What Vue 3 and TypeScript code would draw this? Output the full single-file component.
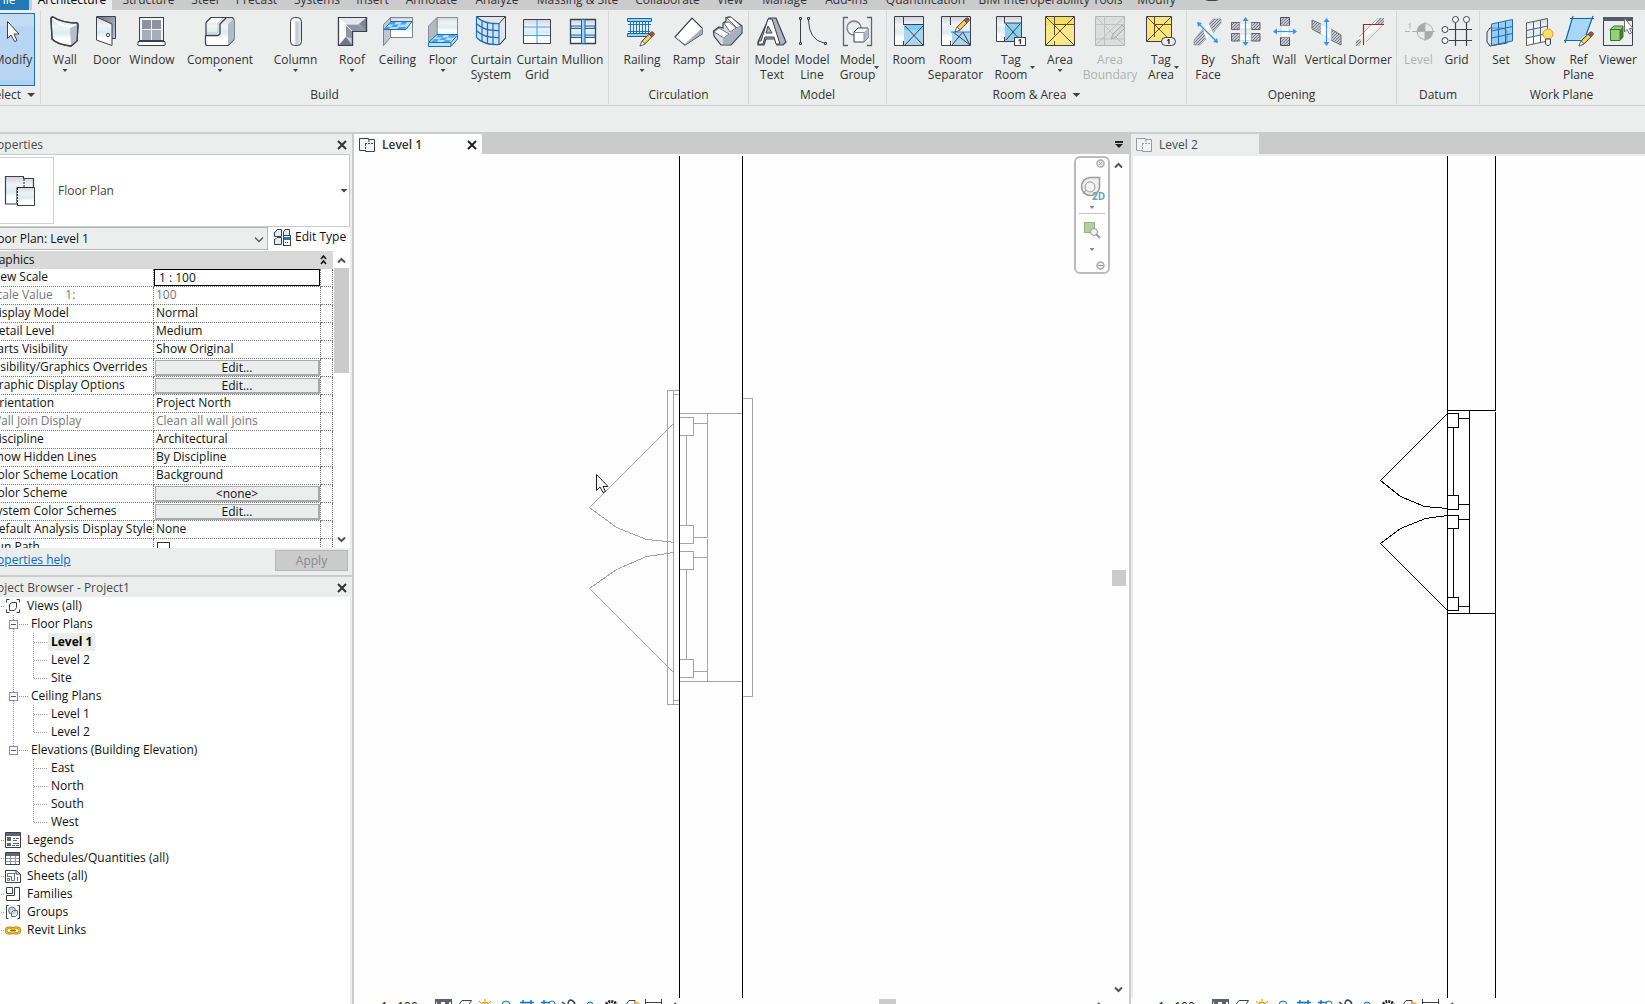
<script setup lang="ts">
import { ref } from 'vue'

type Tool = { icon: string; label: string[]; menu?: 'below' | 'side'; disabled?: boolean }
type Panel = { id: string; title: string; menu?: boolean; tools: Tool[] }
type Row = { name: string; kind: 'text' | 'button' | 'input' | 'check'; value: string; muted?: boolean }
type Node = { label: string; kind: 'root' | 'group' | 'leaf'; icon?: string; last?: boolean; active?: boolean }

const tabs = ['Architecture', 'Structure', 'Steel', 'Precast', 'Systems', 'Insert', 'Annotate', 'Analyze', 'Massing & Site', 'Collaborate', 'View', 'Manage', 'Add-Ins', 'Quantification', 'BIM Interoperability Tools', 'Modify']

const panels: Panel[] = [
  { id: 'build', title: 'Build', tools: [
    { icon: 'wall', label: ['Wall'], menu: 'below' },
    { icon: 'door', label: ['Door'] },
    { icon: 'window', label: ['Window'] },
    { icon: 'component', label: ['Component'], menu: 'below' },
    { icon: 'column', label: ['Column'], menu: 'below' },
    { icon: 'roof', label: ['Roof'], menu: 'below' },
    { icon: 'ceiling', label: ['Ceiling'] },
    { icon: 'floor', label: ['Floor'], menu: 'below' },
    { icon: 'curtainSystem', label: ['Curtain', 'System'] },
    { icon: 'curtainGrid', label: ['Curtain', 'Grid'] },
    { icon: 'mullion', label: ['Mullion'] } ] },
  { id: 'circulation', title: 'Circulation', tools: [
    { icon: 'railing', label: ['Railing'], menu: 'below' },
    { icon: 'ramp', label: ['Ramp'] },
    { icon: 'stair', label: ['Stair'] } ] },
  { id: 'model', title: 'Model', tools: [
    { icon: 'modelText', label: ['Model', 'Text'] },
    { icon: 'modelLine', label: ['Model', 'Line'] },
    { icon: 'modelGroup', label: ['Model', 'Group'], menu: 'side' } ] },
  { id: 'room', title: 'Room & Area', menu: true, tools: [
    { icon: 'room', label: ['Room'] },
    { icon: 'separator', label: ['Room', 'Separator'] },
    { icon: 'tagRoom', label: ['Tag', 'Room'], menu: 'side' },
    { icon: 'area', label: ['Area'], menu: 'below' },
    { icon: 'areaBoundary', label: ['Area', 'Boundary'], disabled: true },
    { icon: 'tagArea', label: ['Tag', 'Area'], menu: 'side' } ] },
  { id: 'opening', title: 'Opening', tools: [
    { icon: 'byFace', label: ['By', 'Face'] },
    { icon: 'shaft', label: ['Shaft'] },
    { icon: 'openWall', label: ['Wall'] },
    { icon: 'vertical', label: ['Vertical'] },
    { icon: 'dormer', label: ['Dormer'] } ] },
  { id: 'datum', title: 'Datum', tools: [
    { icon: 'level', label: ['Level'], disabled: true },
    { icon: 'grid', label: ['Grid'] } ] },
  { id: 'plane', title: 'Work Plane', tools: [
    { icon: 'set', label: ['Set'] },
    { icon: 'show', label: ['Show'] },
    { icon: 'refPlane', label: ['Ref', 'Plane'] },
    { icon: 'viewer', label: ['Viewer'] } ] },
]

const D = '#3b404c'
const pencil = (x: number, y: number) =>
  `<g transform="translate(${x} ${y})"><path d="M0 15L2 10L9 3L12 6L5 13Z" fill="#f5b324" stroke="${D}" stroke-width=".8"/><path d="M0 15L2 10L5 13Z" fill="#fff" stroke="${D}" stroke-width=".6"/><path d="M9 3L11 1Q13 0 14 2T14 4L12 6Z" fill="#9a5a34" stroke="${D}" stroke-width=".6"/><path d="M4 11L10 5" stroke="#ffe79a" stroke-width="1.2"/></g>`

const icons: Record<string, string> = {
  wall: `<path d="M2 4Q2 2 4 2Q14 8 28 8Q29 8 29 10L28 26L22 31Q9 30 3 24Z" fill="url(#face)" stroke="${D}" stroke-width="1.3"/><path d="M21 13L28 8V26L22 31Z" fill="#b9bdc8"/><path d="M4 4Q12 11 21 12L27 9" fill="none" stroke="#fff" stroke-width="2"/><path d="M2 4Q2 2 4 2Q14 8 28 8Q29 8 29 10L28 26L22 31Q9 30 3 24Z" fill="none" stroke="${D}" stroke-width="1.3"/>`,
  door: `<path d="M5.500 1.500H24.500V23.500H20" fill="url(#steel)" stroke="${D}"/><path d="M5.500 2L21 9V30.500L5.500 25Z" fill="url(#face)" stroke="${D}"/><circle cx="17" cy="20" r="1.600" fill="#fff" stroke="${D}"/>`,
  window: `<rect x="3.500" y="2.500" width="24" height="23" fill="#f3f4f6" stroke="${D}"/><path d="M6 5H15V14H6ZM16 5H25V14H16Z" fill="#8e93a1"/><path d="M6 15H15V25H6ZM16 15H25V25H16Z" fill="#a9adba"/><path d="M2 26.500H29V28Q30 30.500 28 30.500H3Q1 30.500 2 28Z" fill="#fff" stroke="${D}"/>`,
  component: `<path d="M2 8Q2 7 7 2.500H28Q30 3 30 6V24Q30 25 24 30.500H3Q1.500 30.500 1.500 28V21L2 20Z" fill="url(#face)" stroke="${D}" stroke-width="1.200"/><path d="M24 9L30 4V24L24 30Z" fill="#b5b9c5"/><path d="M8 3H20L15 8H3Z" fill="#fff"/><path d="M22 3L16 9V19L14 20.500H2" fill="none" stroke="${D}" stroke-width="1.300"/><path d="M19 3L14 8V18H3" fill="none" stroke="#c3c7d0"/>`,
  column: `<rect x="10.500" y="2.500" width="11" height="28" rx="4" fill="url(#tube)" stroke="${D}"/><ellipse cx="16" cy="5" rx="4" ry="1.500" fill="#fff"/>`,
  roof: `<path d="M2.500 2.500H30.500V16.500H16.500V30.500H2.500Z" fill="#c9ccd4" stroke="${D}" stroke-width="1.200"/><path d="M3 3H30L23 9H9Z" fill="#e6e8ec"/><path d="M3 3L10 10V22L3 30Z" fill="#fafafa"/><path d="M10 10H23L30 16H16V23L10 22Z" fill="#8f95a3"/><path d="M3 30L10 22L16 30Z" fill="#70768a"/><path d="M30 3L23 9L30 16Z" fill="#7f8594"/><path d="M10 10L16 16M10 10L3 3" stroke="#fff"/><path d="M2.500 2.500H30.500V16.500H16.500V30.500H2.500Z" fill="none" stroke="${D}" stroke-width="1.200"/>`,
  ceiling: `<path d="M8.500 2.500H30.500V22.500H8.500" fill="url(#face)" stroke="#7e828b"/><path d="M1.500 9.500L8.500 2.500V22.500L1.500 30.500Z" fill="#c2c6d0" stroke="#7e828b"/><path d="M9 6.500H30L24 14.500H2Z" fill="#b7dcfb" stroke="#1971b8"/><path d="M9 7H14L12 9.500H18L20 7H25L23 9.500H17L14.500 12H9L11.500 9.500H6Z M4 12H9L7 14H3ZM20 12H25L23 14H15L17 12Z" fill="#45a0f5"/>`,
  floor: `<path d="M10 2.500H30.500V20H10Z" fill="url(#face)" stroke="#8a8e96"/><path d="M1.500 11L10 2.500V20L1.500 27Z" fill="#b2b7c2" stroke="#8a8e96"/><path d="M10 19.500H30.500V24L24 31.500H1.500V27.500Z" fill="#b9e1f7" stroke="#1971b8"/><path d="M11 20H17L15 22.500H9ZM22 20H29L27 22.500H21ZM15 22.500H21L18 25H12ZM7 24H12L10 27H4ZM18 25H24L22 27H16Z" fill="#53a8f5"/><path d="M2 27.500H24L30 20.500M24 27.500V31" stroke="#1971b8" fill="none"/>`,
  curtainSystem: `<path d="M1.500 1.500H30.500V23L25 29.500Q10 31 2 23Z" fill="#e3e5e9" stroke="${D}"/><path d="M1.500 2Q8 9 24 8V30Q9 30 2 23Z" fill="#cfe3f5"/><path d="M2 2Q8 9 24 8.500M2 9Q9 16 24 15.500M2 16Q9 23 24 22.500M2 23Q9 30 24 29.500M7 5V27M12.500 7V29M18 8V30M24 8V30M1.500 2V23" fill="none" stroke="#1c6fb5" stroke-width="1.200"/><path d="M24 8.500L30 2M30.500 1.500V23L24.500 29.500" fill="none" stroke="${D}"/>`,
  curtainGrid: `<path d="M2.500 4.500H29.500V28.500H2.500Z" fill="url(#face)" stroke="${D}"/><path d="M3 12H29M3 20.500H29M16 5V28" stroke="#3c9cff"/>`,
  mullion: `<path d="M3.500 4.500H28.500V28.500H3.500Z" fill="url(#face)" stroke="${D}" stroke-width="1.300"/><path d="M4 11H28V13.500H4ZM4 20H28V22.500H4Z" fill="#b8dbf7" stroke="#1767a8"/><path d="M14.500 4.500H18V28.500H14.500Z" fill="#9cd0f8" stroke="#1767a8"/>`,
  railing: `<path d="M1.500 3.500H25.500V6.500H1.500ZM1.500 18.500H24V21.500H1.500Z" fill="#9bd0fa" stroke="#1767a8"/><path d="M2 9.500H25M2 16.500H24M4.500 7V18M7.500 7V18M10.500 7V18M13.500 7V18M16.500 7V18M19.500 7V18M22.500 7V18" stroke="#1c74bd" fill="none"/>${pencil(14, 16)}`,
  ramp: `<path d="M2 22L19 3L29 13V19L12 30Z" fill="#fff" stroke="${D}" stroke-width="1.200"/><path d="M12 29L29 13V19L12 30Z" fill="#a6abb9"/><path d="M2.500 22L12 29L29 13" fill="none" stroke="#d5d8de"/>`,
  stair: `<path d="M1.500 16L7 12L11 13V8L14 6V2.500L18 2L30 11V18L19 30H9L2 21Z" fill="#d9dbe0" stroke="${D}" stroke-width="1.200"/><path d="M2 17L7 13L17 19L12 23ZM12 8L17 7L24 13L18 17ZM15 3L19 2L29 11L25 13Z" fill="#fff" stroke="${D}" stroke-width=".7"/><path d="M18 18L25 13L29 12V18L19 29L11 29V24L17 20Z" fill="#aab0bc"/>`,
  modelText: `<path d="M13 3H20L30 27L27 30H21L19 24H10L8 30H2V27Z" fill="#aeb3c0" stroke="${D}" stroke-width="1.200"/><path fill-rule="evenodd" d="M12 4H16L24 29H20L18 22H9L7 29H2L3 26H5ZM12 11L10 18H16Z" fill="#fff" stroke="${D}"/>`,
  modelLine: `<path d="M4.500 5V27M12.500 5Q13 25 28 28" fill="none" stroke="${D}"/><path d="M3.500 2.500H5.500V4.500H3.500ZM3.500 27.500H5.500V29.500H3.500ZM11.500 2.500H13.500V4.500H11.500ZM28.500 27.500H30.500V29.500H28.500Z" fill="#fff" stroke="${D}"/>`,
  modelGroup: `<path d="M6 2.500H1.500V30.500H6M25 2.500H29.500V30.500H25" fill="none" stroke="#62666f" stroke-width="1.300"/><circle cx="12" cy="13" r="7" fill="url(#face)" stroke="#7b7f89" stroke-width="1.300"/><path d="M12 17L16 13H26V23L22 27H12Z" fill="#fff" stroke="${D}"/><path d="M22 17L26 13V23L22 27Z" fill="#b6bac5"/><path d="M12.500 17.500H22V26.500" fill="none" stroke="#898e9b"/>`,
  room: `<path d="M1.500 1.500H30.500V30.500H1.500Z" fill="url(#face)"/><path d="M11 10H31V31H11Z" fill="#a9d6ee"/><path d="M11 10H31V15H11Z" fill="#7fcdf3"/><path d="M10.500 2V10M10.500 26V30M10 9.500H30M12 11L30 30M30 11L12 30" fill="none" stroke="${D}"/><path d="M1.500 1.500H30.500V30.500H1.500Z" fill="none" stroke="${D}"/>`,
  separator: `<path d="M1.500 1.500H30.500V30.500H1.500Z" fill="url(#face)"/><path d="M12 17H31V31H12Z" fill="#a9d6ee"/><path d="M10.500 2V10M10.500 26V30M12 30L23 17L30 30M13 17L30 30" fill="none" stroke="${D}"/><path d="M1.500 1.500H30.500V30.500H1.500Z" fill="none" stroke="${D}"/><path d="M11 17H30" stroke="#1b8bf0"/>${pencil(15, 2)}`,
  tagRoom: `<path d="M1.500 1.500H26.500V26.500H1.500Z" fill="url(#face)"/><path d="M10 8H26V26H10Z" fill="#8fcdee"/><path d="M9.500 2V8M9.500 22V26M9 8H26M11 9L25 25M25 9L11 25" fill="none" stroke="${D}"/><path d="M1.500 1.500H26.500V26.500H1.500Z" fill="none" stroke="${D}"/><rect x="19.500" y="22.500" width="11" height="8" fill="#fff" stroke="${D}"/><text x="25" y="29" font-size="7" font-weight="700" text-anchor="middle">1</text>`,
  area: `<path d="M1.500 1.500H30.500V30.500H1.500Z" fill="#ffe88c"/><path d="M2 2H30V10H2Z" fill="#ffdc62"/><path d="M10.500 2V10M10 9.500H30M10.500 26V30M10.500 10V20M2 2L30 30M30 2L2 30" fill="none" stroke="#5b512d"/><path d="M1.500 1.500H30.500V30.500H1.500Z" fill="none" stroke="${D}"/>`,
  areaBoundary: `<path d="M1.500 1.500H30.500V30.500H1.500Z" fill="#dcdedd"/><path d="M10.500 2V30M2 9.500H30M2 24H30M2 2L30 30M30 2L2 30" fill="none" stroke="#bfc1c1"/><path d="M1.500 1.500H30.500V30.500H1.500Z" fill="none" stroke="#b4b6b6"/><path d="M17 24L19 19L28 10L31 13L22 22Z" fill="#d3d5d5" stroke="#a9abab"/>`,
  tagArea: `<path d="M1.500 1.500H26.500V26.500H1.500Z" fill="#ffe37c"/><path d="M9.500 2V22M9 9.500H26M2 2L26 26M26 2L2 26" fill="none" stroke="#5b512d"/><path d="M1.500 1.500H26.500V26.500H1.500Z" fill="none" stroke="${D}"/><rect x="16.500" y="22.500" width="14" height="8" rx="4" fill="#eceef1" stroke="${D}"/><text x="23.500" y="29" font-size="7" font-weight="700" text-anchor="middle">1</text>`,
  byFace: `<path d="M17 9L21 4H29V8L21 18ZM2 25L11 14L14 24L8 30H2Z" fill="url(#hatch)" stroke="#8b8f98" stroke-width=".6"/><path d="M17 9L21 18L14 24L11 14Z" fill="#fff"/><path d="M7 9L24 26" stroke="#3393f0" stroke-width="1.200"/><path d="M5 7L10 8L6 12ZM26 28L21 27L25 23Z" fill="#3393f0"/>`,
  shaft: `<path d="M1.500 7.500H9.500V14.500H1.500ZM21.500 7.500H30V14.500H21.500ZM1.500 18.500H9.500V26H1.500ZM21.500 18.500H30V26H21.500Z" fill="url(#hatch)" stroke="#60656f"/><path d="M10 8H21V14H10ZM10 19H21V25.500H10Z" fill="#fff" stroke="#d9dadd"/><path d="M15.500 5V28" stroke="#3393f0" stroke-width="1.200"/><path d="M15.500 2L18.500 6H12.500ZM15.500 31L18.500 27H12.500Z" fill="#3393f0"/>`,
  openWall: `<path d="M11.500 2.500H20.500V10.500H11.500ZM11.500 22.500H20.500V30.500H11.500Z" fill="url(#hatch)" stroke="#4b505b"/><path d="M12 11H20V22H12Z" fill="#fff" stroke="#d9dadd"/><path d="M7 16.500H25" stroke="#3393f0" stroke-width="1.200"/><path d="M4 16.500L8 13.500V19.500ZM28 16.500L24 13.500V19.500Z" fill="#3393f0"/>`,
  vertical: `<path d="M2 5L11 9V19L2 14ZM21 14L31 20V30L21 25Z" fill="url(#hatch)" stroke="#6a6f79"/><path d="M11 9L21 14V25L11 19Z" fill="#fff" stroke="#d9dadd"/><path d="M16.500 6V28" stroke="#3393f0" stroke-width="1.200"/><path d="M16.500 3L19.500 7H13.500ZM16.500 31L19.500 27H13.500Z" fill="#3393f0"/>`,
  dormer: `<path d="M2 25L6 26L30 7V2H25L2 25Z" fill="#fff"/><path d="M21 9L25 2.500L30 3V9H22ZM2 25L7 24V28L5 31H1.500Z" fill="url(#hatch)"/><path d="M5 22L24 3M12 27L30 9" stroke="#aeb1b8"/><path d="M9.500 30V9.500H30" fill="none" stroke="#b8201c" stroke-width="1.200"/>`,
  level: `<path d="M2 16.500H10" stroke="#b3b5b5" stroke-dasharray="5 2"/><path d="M7 13.500V8.500L5.500 10" fill="none" stroke="#b3b5b5"/><circle cx="22" cy="16.500" r="8" fill="#e9ebea" stroke="#b0b2b2"/><path d="M22 8.500V16.500H14A8 8 0 0 1 22 8.500ZM22 24.500V16.500H30A8 8 0 0 1 22 24.500Z" fill="#a9abab"/><path d="M10 16.500H32M22 7V26" stroke="#b0b2b2"/>`,
  grid: `<path d="M14.500 8V31M25.500 8V31M8 14.500H31M8 25.500H31" stroke="${D}" stroke-width="1.200"/><g fill="#fff" stroke="${D}"><circle cx="14.500" cy="4.500" r="3"/><circle cx="25.500" cy="4.500" r="3"/><circle cx="4" cy="14.500" r="3"/><circle cx="4" cy="25.500" r="3"/></g>`,
  set: `<path d="M2 17L5 13H18L22 16V28L5 31L2 27Z" fill="#dfeaf3" stroke="${D}"/><path d="M6.500 9L27.500 4.500V26L6.500 30.500Z" fill="#6fbdf0" fill-opacity=".65" stroke="#1a6eb3"/><path d="M6.500 16L27.500 11.500M6.500 23L27.500 18.500M13.500 7.500V29M20.500 6V27.500" stroke="#1a6eb3" fill="none"/>`,
  show: `<path d="M2.500 8L23.500 3.500V26L2.500 30.500Z" fill="url(#face)" stroke="#565b66"/><path d="M2.500 15.500L23.500 11M2.500 23L23.500 18.500M9.500 6.500V29M16.500 5V27.500" stroke="#565b66" fill="none"/><circle cx="24" cy="19" r="5" fill="#ffe06a" stroke="#e0a01c"/><path d="M21.500 24H26.500V29L25 30.500H23L21.500 29Z" fill="#eee" stroke="${D}"/>`,
  refPlane: `<path d="M9.500 3L29.500 2.500L22 24.500L2.500 25.500Z" fill="#a8d6f5"/><path d="M7 3.500H31M1 25.500H20M10 1L2 28M30 1L23 20" stroke="#1767a8" stroke-width="1.200" fill="none"/>${pencil(16, 16)}`,
  viewer: `<path d="M1.500 2.500H30.500V30.500H1.500Z" fill="#eceff2" stroke="${D}"/><path d="M1 2H31V6H1Z" fill="#555b68"/><path d="M8.500 14L12 11H21V22L18 25.500H8.500Z" fill="#9ccb7c" stroke="#2f7d20"/><path d="M18 15L21 11.500V22L18 25Z" fill="#3f7d31"/><path d="M9 14.500H18V25" stroke="#2f7d20" fill="none"/><path d="M22.500 3V17L25 14.500L27.500 19L29.500 18L27.500 13.500H31Z" fill="#fff" stroke="#6b707b"/>`,
  views: `<path d="M4.500 1.500H1.500V4.500M11.500 1.500H14.500V4.500M4.500 14.500H1.500V11.500M11.500 14.500H14.500V11.500" fill="none" stroke="${D}"/><path d="M4.500 6.500L7 4.500H11.500V9.500L9.500 12.500H4.500Z" fill="#fff" stroke="${D}"/>`,
  legends: `<path d="M.5 .5H15.500V15.500H.5Z" fill="#fff" stroke="${D}"/><path d="M1 1H15V4H1Z" fill="#5f6675"/><path d="M2 5H6V9H2ZM2 11H6V14H2Z" fill="#5f6675"/><path d="M8 6.500H10M11 6.500H14M8 8.500H12M8 11.500H14M7 13.500H10M11 13.500H14" stroke="#5f6675"/>`,
  schedules: `<path d="M.5 2.500H14.500V14.500H.5Z" fill="#fff" stroke="${D}"/><path d="M1 3H14V6H1Z" fill="#5f6675"/><path d="M1 8.500H14M1 11.500H14M5.500 6V14M10.500 6V14" stroke="#9094a0"/>`,
  sheets: `<path d="M.5 2.500H11L15.500 6V14.500H.5Z" fill="#fff" stroke="${D}"/><path d="M11 2V6H15" fill="none" stroke="${D}"/><path d="M2.500 5.500H9.500V12.500H6.500V8.500H2.500ZM2.500 10.500H4.500V12.500H2.500ZM12.500 9V13" fill="none" stroke="#6b7180"/>`,
  families: `<path d="M1.500 1.500H7.500V7.500H1.500ZM9.500 1.500H14.500V14.500H1.500V9.500H9.500Z" fill="#fff" stroke="${D}"/>`,
  groups: `<path d="M3.500 1.500H1.500V14.500H3.500M12.500 1.500H14.500V14.500H12.500" fill="none" stroke="${D}"/><circle cx="7" cy="6.500" r="3.500" fill="#cfd2d9" stroke="#6b7180"/><path d="M6.500 8.500L8.500 6.500H12.500V10.500L10.500 12.500H6.500Z" fill="#e4e6ea" fill-opacity=".7" stroke="#6b7180"/>`,
  links: `<rect x="1.200" y="5.800" width="7" height="5.400" rx="2.700" fill="none" stroke="#b17800" stroke-width="2.400"/><rect x="7.800" y="5.800" width="7" height="5.400" rx="2.700" fill="none" stroke="#b17800" stroke-width="2.400"/><rect x="1.200" y="5.800" width="7" height="5.400" rx="2.700" fill="none" stroke="#f5bb22" stroke-width="1.300"/><rect x="7.800" y="5.800" width="7" height="5.400" rx="2.700" fill="none" stroke="#f5bb22" stroke-width="1.300"/><path d="M5 8.500H11" stroke="#8f6000"/>`,
}

const rows: Row[] = [
  { name: 'View Scale', kind: 'input', value: '1 : 100' },
  { name: 'Scale Value    1:', kind: 'text', value: '100', muted: true },
  { name: 'Display Model', kind: 'text', value: 'Normal' },
  { name: 'Detail Level', kind: 'text', value: 'Medium' },
  { name: 'Parts Visibility', kind: 'text', value: 'Show Original' },
  { name: 'Visibility/Graphics Overrides', kind: 'button', value: 'Edit...' },
  { name: 'Graphic Display Options', kind: 'button', value: 'Edit...' },
  { name: 'Orientation', kind: 'text', value: 'Project North' },
  { name: 'Wall Join Display', kind: 'text', value: 'Clean all wall joins', muted: true },
  { name: 'Discipline', kind: 'text', value: 'Architectural' },
  { name: 'Show Hidden Lines', kind: 'text', value: 'By Discipline' },
  { name: 'Color Scheme Location', kind: 'text', value: 'Background' },
  { name: 'Color Scheme', kind: 'button', value: '<none>' },
  { name: 'System Color Schemes', kind: 'button', value: 'Edit...' },
  { name: 'Default Analysis Display Style', kind: 'text', value: 'None' },
  { name: 'Sun Path', kind: 'check', value: '' },
]

const tree: Node[] = [
  { label: 'Views (all)', kind: 'root', icon: 'views' },
  { label: 'Floor Plans', kind: 'group' },
  { label: 'Level 1', kind: 'leaf', active: true },
  { label: 'Level 2', kind: 'leaf' },
  { label: 'Site', kind: 'leaf', last: true },
  { label: 'Ceiling Plans', kind: 'group' },
  { label: 'Level 1', kind: 'leaf' },
  { label: 'Level 2', kind: 'leaf', last: true },
  { label: 'Elevations (Building Elevation)', kind: 'group', last: true },
  { label: 'East', kind: 'leaf' },
  { label: 'North', kind: 'leaf' },
  { label: 'South', kind: 'leaf' },
  { label: 'West', kind: 'leaf', last: true },
  { label: 'Legends', kind: 'root', icon: 'legends' },
  { label: 'Schedules/Quantities (all)', kind: 'root', icon: 'schedules' },
  { label: 'Sheets (all)', kind: 'root', icon: 'sheets' },
  { label: 'Families', kind: 'root', icon: 'families' },
  { label: 'Groups', kind: 'root', icon: 'groups' },
  { label: 'Revit Links', kind: 'root', icon: 'links' },
]
const lastGroup = tree.findIndex(n => n.kind === 'group' && n.last)

// Dotted connector lines drawn in front of each tree row
const guide = (n: Node, i: number) => {
  if (n.kind === 'root') return 'M1 9.500H5'
  const trunk = i < lastGroup ? 'M13.500 0V18' : ''
  if (n.kind === 'group') return (i === lastGroup ? 'M13.500 0V5' : trunk) + 'M19 9.500H28'
  return trunk + (n.last ? 'M33.500 0V10' : 'M33.500 0V18') + 'M34 9.500H48'
}
const guideWidth = { root: 5, group: 30, leaf: 48 }

const controls = [
  { name: 'Detail Level', art: `<path d="M.5 .5H16.500V12H.5Z" fill="#fff" stroke="${D}"/><path d="M0 0H17V3H0ZM2 3H6V6H2ZM10 3H14V6H10Z" fill="#5d6270"/>` },
  { name: 'Visual Style', art: `<path d="M1 8L6 1.500H15.500L12 7V12" fill="#fff" stroke="${D}"/>` },
  { name: 'Sun Path', art: `<circle cx="8" cy="7" r="4" fill="#ffd45a" stroke="#d98c00"/><path d="M8 0V2M2 2L4 4M14 2L12 4" stroke="#d98c00"/>` },
  { name: 'Shadows', art: `<circle cx="8" cy="6" r="4" fill="#d8ecfa" stroke="#1b74bd"/>` },
  { name: 'Crop View', art: `<path d="M1 3.500H15M4 1V12M12 1V12" stroke="#1b74bd" stroke-width="1.500"/><path d="M4 4H11V9H4Z" fill="#8ec7f2"/>` },
  { name: 'Crop Region', art: `<path d="M1 3.500H10M4 1V12" stroke="#1b74bd" stroke-width="1.500"/><circle cx="12" cy="5" r="3" fill="#fff" stroke="#1b74bd"/>` },
  { name: 'Unlocked View', art: `<path d="M1 3L4 5M7 6Q7 1 10 1Q14 2 14 7" fill="none" stroke="${D}" stroke-width="1.500"/>` },
  { name: 'Temporary Hide', art: `<circle cx="8" cy="6" r="3" fill="#bfe0f8" stroke="#1b74bd"/>` },
  { name: 'Reveal Hidden', art: `<path d="M3 5Q8 0 14 5" fill="none" stroke="#222" stroke-width="3" stroke-dasharray="2 1"/>` },
  { name: 'View Properties', art: `<path d="M1 7L5 1.500H11V8" fill="#fff" stroke="${D}"/><circle cx="13" cy="6" r="3" fill="#ffb52e"/>` },
  { name: 'Constraints', art: `<path d="M.5 0V8M16.500 0V8M1 3.500H16" stroke="${D}"/>` },
]

const scale = ref('1 : 100')
const sun = ref(false)
</script>

<template>
  <div class="app">
    <svg width="0" height="0" class="defs" aria-hidden="true">
      <defs>
        <linearGradient id="face" x1="0" y1="0" x2="0" y2="1">
          <stop offset="0" stop-color="#d3d5dc" /><stop offset=".3" stop-color="#f2f3f5" />
          <stop offset=".55" stop-color="#dcecee" /><stop offset=".75" stop-color="#fff" /><stop offset="1" stop-color="#fafafa" />
        </linearGradient>
        <linearGradient id="steel" x1="0" y1="0" x2="1" y2="1">
          <stop offset="0" stop-color="#6c7180" /><stop offset="1" stop-color="#c6c9d1" />
        </linearGradient>
        <linearGradient id="tube">
          <stop offset="0" stop-color="#fff" /><stop offset=".35" stop-color="#fff" />
          <stop offset=".5" stop-color="#c3c6cf" /><stop offset="1" stop-color="#e7e8ec" />
        </linearGradient>
        <pattern id="hatch" width="3" height="3" patternUnits="userSpaceOnUse">
          <rect width="3" height="3" fill="#c3c7cf" /><path d="M0 3L3 0" stroke="#787e8a" />
        </pattern>
      </defs>
    </svg>

    <nav class="tabs" aria-label="Ribbon tabs">
      <button class="file">File</button>
      <button v-for="(t, i) in tabs" :key="t" class="tab" :class="{ on: i === 0 }">{{ t }}</button>
      <button class="collapse" aria-label="Minimize ribbon">
        <svg width="26" height="16"><rect x="1.500" y="-3" width="13" height="12.500" rx="2" fill="#fff" stroke="#3b404c" /><path d="M5 8H11L8 4Z" fill="#3b404c" /><path d="M18 5H25L21.500 9Z" fill="#222" /></svg>
      </button>
    </nav>

    <div class="ribbon">
      <section class="panel select">
        <button class="modify">
          <svg width="32" height="32"><path d="M10.500 6.500V23.500L14 20L17.500 26.500L20 25.500L17 19H22Z" fill="#fff" stroke="#3b404c" /></svg>
          <span>Modify</span>
        </button>
        <button class="title">Select <i class="caret big"></i></button>
      </section>
      <section v-for="p in panels" :key="p.id" class="panel" :class="p.id">
        <div class="tools">
          <button v-for="t in p.tools" :key="t.icon" class="tool" :disabled="t.disabled">
            <svg width="32" height="32" v-html="icons[t.icon]"></svg>
            <span v-for="l in t.label" :key="l">{{ l }}</span>
            <i v-if="t.menu" class="caret" :class="t.menu"></i>
          </button>
        </div>
        <div class="title">{{ p.title }} <i v-if="p.menu" class="caret big"></i></div>
      </section>
    </div>
    <div class="options"></div>

    <main class="work">
      <aside class="dock">
        <section class="props">
          <header class="bar">
            <h2>Properties</h2>
            <button class="close" aria-label="Close properties"><svg width="10" height="10"><path d="M1 1L9 9M9 1L1 9" stroke="#333" stroke-width="2" /></svg></button>
          </header>
          <button class="type">
            <span class="thumb">
              <svg width="34" height="34"><path d="M3.500 2.500H21.500V4.500H31.500V14H15V30H3.500Z" fill="url(#face)" stroke="#3b404c" stroke-width="1.200" /><path d="M15 13.500H33V32H15Z" fill="#fff" /><path d="M15 13.500H32.500V31.500H15" fill="url(#face)" stroke="#3b404c" /><path d="M22 5V13M15 13.500H32M15.500 14V31" fill="none" stroke="#222" stroke-dasharray="2 1" /></svg>
            </span>
            <span class="name">Floor Plan</span>
            <i class="caret big"></i>
          </button>
          <div class="instance">
            <select aria-label="Element"><option>Floor Plan: Level 1</option></select>
            <svg class="drop" width="10" height="8"><path d="M1 1.500L5 5.500L9 1.500" fill="none" stroke="#555" stroke-width="1.300" /></svg>
            <button class="edit-type">
              <svg width="17" height="17"><path d="M1.500 3L3 .5H7.500V7.500H.5V3ZM9.500 3L11 .5H15.500V7H9.500ZM1.500 10L3 8.500H7.500V15.500H.5V10Z" fill="#e3eef0" stroke="#3b404c" /><rect x="9.500" y="6.500" width="7" height="10" fill="#fff" stroke="#3b404c" /><path d="M10 8H16V11H10Z" fill="#2474c6" /><path d="M11 13.500H15" stroke="#3b404c" stroke-dasharray="1 1" /></svg>
              Edit Type
            </button>
          </div>
          <div class="sheet">
            <div class="grid">
              <button class="group">
                <span>Graphics</span>
                <svg width="7" height="10"><path d="M1 4L3.500 1L6 4M1 9L3.500 6L6 9" fill="none" stroke="#111" stroke-width="1.500" /></svg>
              </button>
              <table>
                <colgroup><col class="c-name" /><col class="c-value" /><col class="c-link" /></colgroup>
                <tbody>
                  <tr v-for="r in rows" :key="r.name" :class="{ muted: r.muted }">
                    <th scope="row">{{ r.name }}</th>
                    <td :class="r.kind">
                      <input v-if="r.kind === 'input'" v-model="scale" type="text" :aria-label="r.name" />
                      <button v-else-if="r.kind === 'button'" :aria-label="r.name + ' ' + r.value">{{ r.value }}</button>
                      <input v-else-if="r.kind === 'check'" v-model="sun" type="checkbox" :aria-label="r.name" />
                      <template v-else>{{ r.value }}</template>
                    </td>
                    <td></td>
                  </tr>
                </tbody>
              </table>
            </div>
            <div class="scroll thin">
              <svg width="9" height="7"><path d="M1 5.500L4.500 2L8 5.500" fill="none" stroke="#555" stroke-width="2" /></svg>
              <i class="handle"></i>
              <svg width="9" height="7"><path d="M1 1.500L4.500 5L8 1.500" fill="none" stroke="#555" stroke-width="2" /></svg>
            </div>
          </div>
          <footer>
            <a href="#help">Properties help</a>
            <button disabled>Apply</button>
          </footer>
        </section>

        <section class="browser">
          <header class="bar">
            <h2>Project Browser - Project1</h2>
            <button class="close" aria-label="Close browser"><svg width="10" height="10"><path d="M1 1L9 9M9 1L1 9" stroke="#333" stroke-width="2" /></svg></button>
          </header>
          <ul>
            <li v-for="(n, i) in tree" :key="i" :class="n.kind">
              <svg :width="guideWidth[n.kind]" height="18">
                <path :d="guide(n, i)" fill="none" stroke="#999" stroke-dasharray="1 1" />
                <template v-if="n.kind === 'group'">
                  <rect x="9.500" y="5.500" width="8" height="8" fill="#fff" stroke="#8e8f8f" />
                  <path d="M11 9.500H16" stroke="#3b5bb5" />
                </template>
              </svg>
              <svg v-if="n.icon" width="16" height="16" v-html="icons[n.icon]"></svg>
              <span :class="{ active: n.active }">{{ n.label }}</span>
            </li>
          </ul>
        </section>
      </aside>

      <section class="view first">
        <header class="view-tabs">
          <button class="view-tab">
            <svg width="17" height="15"><path d="M.5 .5H9.500V1.500H15.500V13.500H6.500V12.500H.5Z" fill="#f3f4f6" stroke="#3b404c" /><path d="M10 2V6M6 5.500H15M6.500 6V13" fill="none" stroke="#3b404c" stroke-dasharray="2 1" /></svg>
            <b>Level 1</b>
            <svg width="10" height="10"><path d="M1 1L9 9M9 1L1 9" stroke="#222" stroke-width="2" /></svg>
          </button>
          <button class="list" aria-label="Tab list"><svg width="8" height="8"><path d="M0 1H8" stroke="#222" stroke-width="2" /><path d="M0 3H8L4 7Z" fill="#222" /></svg></button>
        </header>
        <div class="stage">
          <svg class="drawing" role="img" aria-label="Level 1 floor plan">
            <g transform="translate(-353.500 -153.500)" fill="none" shape-rendering="crispEdges">
              <g stroke="#a3a3a3">
                <path d="M679 390H667V704H679M673 390V704M673 394H679M673 700H679" />
                <path d="M673 423L589 507L616 527L646 539L667 541L673 542M673 552L667 553L646 556L616 569L589 588L673 672" />
                <path d="M679 417H693V435H679M679 525H693V543H679M679 551H693V569H679M679 659H693V677H679" />
                <path d="M686 435V525M686 569V659M679 413H742M679 681H742M707 413V537M707 538V681M693 423H707M693 537H707M693 557H707M693 671H707" />
                <path d="M742 398H752V696H742" />
              </g>
              <path d="M679 155V998M742 155V998" stroke="#000" />
            </g>
            <path d="M242.500 320.500V336.500L246 333L249 338.500L251.500 337.500L249 332.500H254Z" fill="#fff" stroke="#1c1c3c" />
          </svg>
          <div class="navbar">
            <button aria-label="Close navigation"><svg width="9" height="9"><circle cx="4.500" cy="4.500" r="3.500" fill="#eee" stroke="#aaa" stroke-width="1.500" /><path d="M3 3L6 6M6 3L3 6" stroke="#999" /></svg></button>
            <button class="wheel" aria-label="2D steering wheel">
              <svg width="26" height="26"><path d="M12 1.500H20.500V11A9 9 0 1 1 11 1.500Z" fill="#efefef" stroke="#9a9a9a" stroke-width="1.500" /><circle cx="11" cy="11" r="5" fill="#f6f6f6" stroke="#9a9a9a" /><path d="M7 14L4 18" stroke="#9a9a9a" /><text x="13" y="24" font-size="10" font-weight="700" fill="#6e9fc6">2D</text></svg>
              <i class="caret"></i>
            </button>
            <hr />
            <button class="zoomer" aria-label="Zoom in region">
              <svg width="18" height="18"><rect x="1.500" y="1.500" width="10" height="10" fill="#b4cda4" stroke="#8fb67c" /><circle cx="11" cy="11" r="3.500" fill="#f2f2f2" stroke="#999" /><path d="M13 13L17 17" stroke="#999" stroke-width="2" /></svg>
              <i class="caret"></i>
            </button>
            <button class="end" aria-label="Customize"><svg width="9" height="9"><circle cx="4.500" cy="4.500" r="3.500" fill="#eee" stroke="#aaa" stroke-width="1.500" /><path d="M2 4.500H7" stroke="#999" /></svg></button>
          </div>
          <div class="scroll wide">
            <svg width="9" height="7"><path d="M1 5.500L4.500 2L8 5.500" fill="none" stroke="#555" stroke-width="2" /></svg>
            <i class="handle"></i>
            <svg width="9" height="7"><path d="M1 1.500L4.500 5L8 1.500" fill="none" stroke="#555" stroke-width="2" /></svg>
          </div>
        </div>
        <footer class="controls">
          <span class="ratio">1 : 100</span>
          <button v-for="c in controls" :key="c.name" :aria-label="c.name"><svg width="18" height="12" v-html="c.art"></svg></button>
          <svg class="arrow" width="8" height="12"><path d="M6 2L2 6L6 10" fill="none" stroke="#555" stroke-width="2" /></svg>
          <i class="hthumb"></i>
          <svg class="arrow right" width="8" height="12"><path d="M2 2L6 6L2 10" fill="none" stroke="#555" stroke-width="2" /></svg>
        </footer>
      </section>

      <section class="view second">
        <header class="view-tabs">
          <button class="view-tab idle">
            <svg width="17" height="15"><path d="M.5 .5H9.500V1.500H15.500V13.500H6.500V12.500H.5Z" fill="#f3f4f6" stroke="#999ca3" /><path d="M10 2V6M6 5.500H15M6.500 6V13" fill="none" stroke="#999ca3" stroke-dasharray="2 1" /></svg>
            <span>Level 2</span>
          </button>
        </header>
        <div class="stage">
          <svg class="drawing" role="img" aria-label="Level 2 floor plan">
            <g transform="translate(-1132.500 -155.500)" fill="none" stroke="#000" shape-rendering="crispEdges">
              <path d="M1447 155V998M1495 155V409M1495 411V998" />
              <path d="M1447 410H1495M1447 613H1495M1469 410V613" />
              <path d="M1447 413H1458V427H1447M1447 495H1458V509H1447M1447 515H1458V528H1447M1447 597H1458V610H1447" />
              <path d="M1453 427V495M1453 528V597M1458 418H1469M1458 504H1469M1458 519H1469M1458 606H1469" />
              <path d="M1447 413L1380 480L1400 496L1424 506L1447 508M1447 515L1425 518L1400 528L1380 543L1447 610" />
            </g>
          </svg>
        </div>
        <footer class="controls">
          <span class="ratio">1 : 100</span>
          <button v-for="c in controls" :key="c.name" :aria-label="c.name"><svg width="18" height="12" v-html="c.art"></svg></button>
          <svg class="arrow" width="8" height="12"><path d="M6 2L2 6L6 10" fill="none" stroke="#555" stroke-width="2" /></svg>
        </footer>
      </section>
    </main>
  </div>
</template>

<style>
body { overflow: hidden; }
</style>

<style scoped>
* { box-sizing: border-box; }
.app {
  display: flex; flex-direction: column; height: 100vh; margin-left: -16px; overflow: hidden;
  background: #ebeeed; color: #333; font: 12px/16px "Open Sans", "Noto Sans", sans-serif;
}
.defs { position: absolute; }
button { margin: 0; padding: 0; border: 0; background: none; color: inherit; font: inherit; }
svg { display: block; flex: none; }
h2 { margin: 0; font-size: 12px; font-weight: 400; }

.caret { display: block; flex: none; width: 5px; height: 3px; background: #444; clip-path: polygon(0 0, 100% 0, 50% 100%); }
.caret.big { width: 8px; height: 4px; }

/* The tab strip is scrolled up so that only the foot of each tab shows */
.tabs {
  display: grid; flex: none; height: 10px; align-content: end; overflow: hidden; background: #cbcbcb;
  grid-template-columns: 45px 83px 70px 43px 60px 61px 50px 68px 63px 98px 82px 43px 66px 58px 100px 150px 62px 50px;
}
.tabs button { height: 18px; line-height: 16px; padding-bottom: 2px; white-space: nowrap; }
.tabs .file { padding-right: 1px; background: #2379b5; color: #fff; }
.tabs .tab { margin-left: 3px; }
.tabs .on { background: #ebeeed; color: #000; }
.tabs .collapse { display: flex; align-items: flex-end; padding: 0 0 3px 18px; }

.ribbon { display: flex; flex: none; height: 96px; border-bottom: 1px solid #cbcbcb; }
.panel { display: flex; flex-direction: column; flex: none; margin: 1px 0; padding: 4px 3px 0; border-right: 1px solid #d5d7d6; }
.panel:last-child { border-right: 0; }
.tools { display: grid; flex: 1; align-items: start; }
.build .tools { grid-template-columns: 42px 42px 48px 88px 63px 50px 41px 50px 46px 46px 45px; }
.circulation { width: 140px; padding-left: 8px; }
.circulation .tools { grid-template-columns: 50px 44px 33px; }
.model .tools { grid-template-columns: 40px 40px 51px; }
.room .tools { grid-template-columns: 38px 55px 56px 42px 58px 44px; }
.opening .tools { grid-template-columns: 36px 39px 39px 43px 46px; }
.datum .tools { grid-template-columns: 37px 39px; }
.plane .tools { grid-template-columns: 36px 42px 35px 44px; }
.tool { position: relative; display: flex; flex-direction: column; align-items: center; line-height: 15px; }
.tool svg { margin-bottom: 5px; }
.tool span { white-space: nowrap; }
.tool:disabled { color: #b0b2b2; }
.caret.below { margin-top: 2px; }
.caret.side { position: absolute; right: 4px; top: 51px; }
.title { display: flex; align-items: center; justify-content: center; gap: 6px; height: 18px; }
.circulation .title { padding-right: 5px; }
.select { width: 57px; padding: 2px 5px 0 7px; }
.modify {
  display: flex; flex: 1; flex-direction: column; align-items: center; padding-top: 1px; line-height: 15px;
  border: 1px solid #1a6fb8; background: linear-gradient(#c3dcf4 12px, #b8d6f4 12px, #b8d6f4 66px, #aed2f2 66px);
}
.modify svg { margin: 0 0 5px; }
.select .title { flex: none; margin-left: -3px; }
.options { flex: none; height: 28px; border-bottom: 2px solid #cbcbcb; }

.work { display: flex; flex: 1; min-height: 0; }
.dock { display: flex; flex: none; flex-direction: column; width: 370px; border-right: 2px solid #cbcbcb; }
.bar { display: flex; flex: none; align-items: center; justify-content: space-between; height: 20px; padding: 2px 3px 0 1px; color: #4a4a4a; }
.props, .browser { padding-right: 2px; }
.props { flex: none; }
.type { display: flex; align-items: center; width: 100%; height: 73px; border: 1px solid #c9cbcb; background: #fff; color: #444; }
.thumb { display: flex; align-items: center; justify-content: flex-end; width: 69px; height: 67px; padding-right: 17px; border: 1px solid #d0d2d2; }
.type .name { flex: 1; padding-left: 4px; text-align: left; }
.type .caret { margin-right: 1px; }
.instance { position: relative; display: flex; align-items: flex-start; height: 24px; background: #fff; }
.instance select {
  width: 284px; height: 23px; padding: 0 0 0 3px; border: 1px solid #b5b7b7; border-radius: 0; appearance: none;
  background: #ebeeed; color: #111; font: inherit;
}
.drop { position: absolute; left: 270px; top: 9px; }
.edit-type { display: flex; gap: 4px; align-items: center; height: 20px; padding-left: 6px; color: #111; white-space: nowrap; }
.sheet { display: flex; height: 297px; overflow: hidden; background: #fff; color: #111; }
.grid { width: 349px; overflow: hidden; }
.group { display: flex; align-items: center; justify-content: space-between; width: 100%; height: 18px; padding: 0 6px 0 1px; background: #d8d8d8; }
table { width: 349px; table-layout: fixed; border-collapse: separate; border-spacing: 0; }
.c-name { width: 170px; }
.c-value { width: 167px; }
.c-link { width: 12px; }
th, td {
  height: 18px; padding: 0; border-right: 1px dotted #777; border-bottom: 1px dotted #777; overflow: hidden;
  font-weight: 400; line-height: 15px; text-align: left; vertical-align: top; white-space: pre;
}
th { padding-left: 6px; }
td.text { padding-left: 2px; }
.muted { color: #777; }
td input[type='text'] { display: block; width: 100%; height: 17px; padding: 0 0 1px 4px; border: 1px solid #000; color: inherit; font: inherit; }
td.button { padding-left: 1px; vertical-align: middle; }
td button { display: block; width: 100%; height: 16px; border: 1px solid #a9a9a9; border-width: 1px 2px 2px 1px; background: #ebeeed; line-height: 13px; }
td input[type='checkbox'] { display: block; width: 13px; height: 13px; margin: 3px 0 0 3px; appearance: none; border: 1px solid #333; }
.scroll { display: flex; flex-direction: column; align-items: center; justify-content: space-between; }
.handle { background: #cbcbcb; }
.thin { flex: 1; padding: 6px 0 5px; }
.thin .handle { width: 15px; height: 105px; margin: 4px 0 auto; }
.props footer { display: flex; align-items: flex-start; justify-content: space-between; height: 29px; margin-right: -2px; padding: 2px 4px 0 1px; border-bottom: 2px solid #cbcbcb; }
.props footer a { color: #0a68c9; line-height: 20px; }
.props footer button { width: 73px; height: 21px; border: 1px solid #b8b8b8; background: #cbcbcb; color: #8a8a8a; }
.browser { display: flex; flex: 1; flex-direction: column; min-height: 0; }
ul { flex: 1; margin: 0; padding: 0 0 0 16px; overflow: hidden; background: #fff; color: #111; list-style: none; }
li { display: flex; align-items: center; height: 18px; }
li span { padding: 0 3px; line-height: 18px; white-space: nowrap; }
li.root span { padding-left: 6px; }
li.group { height: 18px; padding: 0; background: none; justify-content: flex-start; }
li.group span { padding-left: 1px; }
.active { background: #ebeeed; font-weight: 700; color: #000; }

.view { display: flex; flex-direction: column; min-width: 0; background: #fefefe; }
.first { flex: 775 1 0; border-right: 2px solid #cbcbcb; }
.second { flex: 514 1 0; }
.view-tabs { display: flex; flex: none; justify-content: space-between; height: 20px; background: #cbcbcb; }
.view-tab { display: flex; align-items: center; width: 128px; height: 20px; padding: 2px 5px 0; background: #fefefe; text-align: left; }
.view-tab b, .view-tab span { flex: 1; padding-left: 6px; font-weight: 600; }
.view-tab span { font-weight: 400; }
.view-tab.idle { background: #ebeeed; color: #4a4a4a; }
.list { padding: 2px 6px 0 0; }
.stage { position: relative; display: flex; flex: 1; min-height: 0; overflow: hidden; }
.drawing { flex: 1; width: 100%; height: 100%; min-width: 0; }
.second .stage { border: solid #ebeeed; border-width: 2px 0 0 2px; }
.wide { flex: none; width: 21px; padding: 8px 0 5px; }
.wide .handle { width: 14px; height: 16px; }
.navbar {
  position: absolute; right: 19px; top: 2px; display: flex; flex-direction: column; align-items: center;
  width: 36px; height: 118px; padding: 1px 2px; border: 2px solid #bcbcbc; border-radius: 6px; background: #fefefe;
}
.navbar button { display: flex; flex-direction: column; align-items: center; gap: 4px; }
.navbar button:first-child, .navbar .end { align-self: flex-end; padding-right: 1px; }
.navbar .caret { background: #888; }
.wheel { margin-top: 8px; }
.navbar hr { width: 26px; margin: 4px 0 7px; border: 0; border-top: 1px solid #c4c4c4; }
.zoomer .caret { margin-top: 5px; }
.navbar .end { margin-top: auto; padding-bottom: 1px; }
.controls { display: flex; flex: none; align-items: flex-start; gap: 3px; height: 6px; padding: 1px 0 0 27px; overflow: hidden; color: #111; }
.ratio { width: 51px; }
.arrow { margin: 2px 0 0 4px; }
.hthumb { width: 17px; height: 16px; margin-left: 198px; background: #cbcbcb; }
.right { margin-left: auto; margin-right: 25px; }
</style>
